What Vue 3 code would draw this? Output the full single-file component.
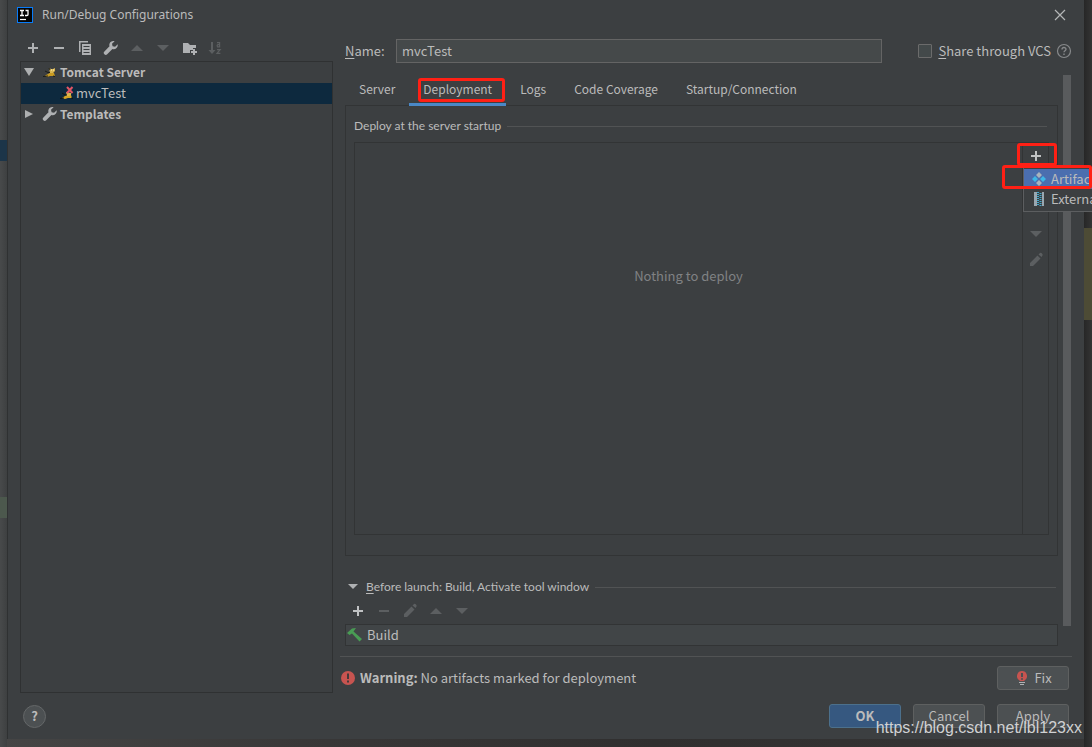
<script setup>
import { ref } from 'vue'

const name = ref('mvcTest')
const shared = ref(false)
const active = ref('Deployment')
const tabs = ['Server', 'Deployment', 'Logs', 'Code Coverage', 'Startup/Connection']
</script>

<template>
  <div class="desktop">
    <section class="dialog" role="dialog" aria-labelledby="dialog-title">
      <header class="titlebar">
        <svg class="logo" width="16" height="16" viewBox="0 0 16 16">
          <rect width="16" height="16" fill="#087cfa" />
          <rect x="1" y="1" width="14" height="14" fill="#050505" />
          <path d="M3 3.500h4M5 3.500v5M3 8.500h4M8.500 3.500h2.500v4q0 1-1 1H8" fill="none" stroke="#fff" stroke-width="1.300" />
          <path d="M3 12.500h6" stroke="#fff" stroke-width="1.200" />
        </svg>
        <h1 id="dialog-title">Run/Debug Configurations</h1>
        <button class="icon close" aria-label="Close">
          <svg width="16" height="16" viewBox="0 0 16 16"><path d="M3 3l10 10M13 3L3 13" stroke="#b4b6b7" stroke-width="1.200" /></svg>
        </button>
      </header>

      <div class="body">
        <aside class="sidebar">
          <div class="tools">
            <button class="icon" aria-label="Add"><svg width="16" height="16" viewBox="0 0 16 16"><path d="M8 3v10M3 8h10" stroke="#afb1b3" stroke-width="2" /></svg></button>
            <button class="icon" aria-label="Remove"><svg width="16" height="16" viewBox="0 0 16 16"><path d="M3 8h10" stroke="#afb1b3" stroke-width="2" /></svg></button>
            <button class="icon" aria-label="Copy">
              <svg width="16" height="16" viewBox="0 0 16 16"><path d="M2 12V1h9v1.500H3.500V12z" fill="#afb1b3" /><path fill-rule="evenodd" d="M5 4h9v11H5zM6.500 6v1h6V6zM6.500 9v1h6V9zM6.500 12v1h6v-1z" fill="#afb1b3" /></svg>
            </button>
            <button class="icon" aria-label="Edit templates">
              <svg width="16" height="16" viewBox="0 0 16 16"><path d="M14.700 4.200l-2.600 2.500-2.500-.5-.6-2.400 2.600-2.600c-2-.6-4.400.3-5.100 2.500-.3 1-.3 1.700 0 2.500L1.400 11.400a1.900 1.900 0 0 0 2.800 2.900l5.200-5.200c3 .9 5.900-1.700 5.300-4.900z" fill="#afb1b3" /></svg>
            </button>
            <button class="icon" aria-label="Move up" disabled><svg width="16" height="16" viewBox="0 0 16 16"><path d="M2 11h12L8 5z" fill="#5c5f61" /></svg></button>
            <button class="icon" aria-label="Move down" disabled><svg width="16" height="16" viewBox="0 0 16 16"><path d="M2 5h12l-6 6z" fill="#5c5f61" /></svg></button>
            <button class="icon" aria-label="Create folder">
              <svg width="16" height="16" viewBox="0 0 16 16"><path d="M2 3h5l2 2h6v3h-3v2H9v3H2z" fill="#afb1b3" /><path d="M13 9v6M10 12h6" stroke="#afb1b3" stroke-width="2" /></svg>
            </button>
            <button class="icon" aria-label="Sort" disabled>
              <svg width="16" height="16" viewBox="0 0 16 16"><path d="M4 2h2v8h2.500L5 14 1.500 10H4z" fill="#5c5f61" /><path d="M10 2.600h2.600v4.200h-2.100q-.9-1.700.5-2.100h1.600M10 9.600h3.200L10 13.400h3.400" fill="none" stroke="#5c5f61" stroke-width="1.200" /></svg>
            </button>
          </div>
          <ul class="tree">
            <li>
              <svg class="arrow" width="12" height="12" viewBox="0 0 12 12"><path d="M1 2h10L6 10z" fill="#adafb0" /></svg>
              <svg class="node" width="16" height="16" viewBox="0 0 16 16">
                <path d="M3 11.500l3-1.500 3-2 3 1 1 3H8l-3 1z" fill="#c99b22" /><path d="M7 4l2 1h2l2-1v3l-2 2H8z" fill="#d9b650" /><path d="M3 7l3 1.500h2M1 12.500l5-.5M11 12l2 .5M7 4l1 2" fill="none" stroke="#1c1d17" stroke-width="1" /><path d="M9 6h1M11 6h1" stroke="#fff5cc" stroke-width="1" />
              </svg>
              <b>Tomcat Server</b>
            </li>
            <li class="child selected">
              <svg class="node" width="16" height="16" viewBox="0 0 16 16">
                <path d="M2 13l3-2 3-2 3 1 1 3H8l-3 1z" fill="#d3a526" /><path d="M6 7l5 1v2l-2 1H7z" fill="#d9b650" /><path d="M2 8l3 2h2M0 13.500l4-.5M11 13l2 .5" fill="none" stroke="#11150f" stroke-width="1" /><path d="M7 2l5.500 6M12.500 2L7 8" stroke="#e05565" stroke-width="2" />
              </svg>
              <span>mvcTest</span>
            </li>
            <li>
              <svg class="arrow" width="12" height="12" viewBox="0 0 12 12"><path d="M2 2l8 4-8 4z" fill="#adafb0" /></svg>
              <svg class="node" width="16" height="16" viewBox="0 0 16 16"><path d="M14.700 4.200l-2.600 2.500-2.500-.5-.6-2.400 2.600-2.600c-2-.6-4.400.3-5.100 2.500-.3 1-.3 1.700 0 2.500L1.400 11.400a1.900 1.900 0 0 0 2.800 2.900l5.200-5.200c3 .9 5.900-1.700 5.300-4.900z" fill="#afb1b3" /></svg>
              <b>Templates</b>
            </li>
          </ul>
        </aside>

        <main class="main">
          <div class="namerow">
            <label class="namelabel" for="name"><u>N</u>ame:</label>
            <input id="name" v-model="name" class="field" type="text" />
            <input id="share" v-model="shared" class="check" type="checkbox" />
            <label for="share"><u>S</u>hare through VCS</label>
            <button class="icon hint" aria-label="About sharing">
              <svg width="16" height="16" viewBox="0 0 16 16"><circle cx="8" cy="8" r="6.500" fill="none" stroke="#87898b" stroke-width="1.200" /><path d="M6 6.500C6 3.800 10 3.900 10 6.300c0 1.400-2 1.500-2 3" fill="none" stroke="#87898b" stroke-width="1.300" /><path d="M7.300 10.500h1.400V12H7.300z" fill="#87898b" /></svg>
            </button>
          </div>

          <div class="scroller">
            <div class="content">
              <nav class="tabs" role="tablist">
                <button v-for="tab in tabs" :key="tab" class="tab" :class="{ active: tab === active, marked: tab === 'Deployment' }" role="tab" :aria-selected="tab === active" @click="active = tab">{{ tab }}</button>
              </nav>
              <div class="panel">
                <h2 class="caption">Deploy at the server startup</h2>
                <div class="deploy">
                  <p class="empty">Nothing to deploy</p>
                  <div class="side">
                    <button class="icon add" aria-label="Add artifact"><svg width="16" height="16" viewBox="0 0 16 16"><path d="M8 3v10M3 8h10" stroke="#c0c2c3" stroke-width="2" /></svg></button>
                    <button class="icon" aria-label="Move artifact down" disabled><svg width="16" height="16" viewBox="0 0 16 16"><path d="M2 5h12l-6 6z" fill="#5c5f61" /></svg></button>
                    <button class="icon" aria-label="Edit artifact" disabled><svg width="16" height="16" viewBox="0 0 16 16"><path d="M2 11l7.500-7.500 3 3L5 14H2zM10.500 2.500L12 1q1-.5 2 .5t.5 2L13.500 5z" fill="#5c5f61" /></svg></button>
                    <div class="popup" role="menu">
                      <button class="item current" role="menuitem">
                        <svg width="16" height="16" viewBox="0 0 16 16"><path d="M8 1l3 3-3 3-3-3zM8 9l3 3-3 3-3-3z" fill="#a9b3bc" /><path d="M4 5l3 3-3 3-3-3zM12 5l3 3-3 3-3-3z" fill="#3eb6e5" /></svg>
                        Artifact...
                      </button>
                      <button class="item" role="menuitem">
                        <svg width="16" height="16" viewBox="0 0 16 16"><path d="M3 1h3v14H3zM11 1h2v14h-2z" fill="#9aa7b0" /><path d="M7 1v14M9.500 2v13" stroke="#40a9ce" stroke-width="2" stroke-dasharray="1 1" /></svg>
                        External Source...
                      </button>
                    </div>
                  </div>
                </div>
              </div>

              <section class="launch">
                <h2 class="caption">
                  <svg width="16" height="16" viewBox="0 0 16 16"><path d="M3 5h10l-5 5z" fill="#afb1b3" /></svg>
                  <span><u>B</u>efore launch: Build, Activate tool window</span>
                </h2>
                <div class="tools">
                  <button class="icon" aria-label="Add task"><svg width="16" height="16" viewBox="0 0 16 16"><path d="M8 3v10M3 8h10" stroke="#c0c2c3" stroke-width="2" /></svg></button>
                  <button class="icon" aria-label="Remove task" disabled><svg width="16" height="16" viewBox="0 0 16 16"><path d="M3 8h10" stroke="#5c5f61" stroke-width="2" /></svg></button>
                  <button class="icon" aria-label="Edit task" disabled><svg width="16" height="16" viewBox="0 0 16 16"><path d="M2 11l7.500-7.500 3 3L5 14H2zM10.500 2.500L12 1q1-.5 2 .5t.5 2L13.500 5z" fill="#5c5f61" /></svg></button>
                  <button class="icon" aria-label="Move task up" disabled><svg width="16" height="16" viewBox="0 0 16 16"><path d="M2 11h12L8 5z" fill="#5c5f61" /></svg></button>
                  <button class="icon" aria-label="Move task down" disabled><svg width="16" height="16" viewBox="0 0 16 16"><path d="M2 5h12l-6 6z" fill="#5c5f61" /></svg></button>
                </div>
                <ul class="tasks">
                  <li>
                    <svg width="16" height="16" viewBox="0 0 16 16"><path d="M0 6l5-4.500 4-.5-2.500 3.500L15 12l-2.500 2.500L5 6.500 2.500 8z" fill="#499c54" /></svg>
                    Build
                  </li>
                </ul>
              </section>
            </div>
            <div class="bar" aria-hidden="true"></div>
          </div>

          <div class="warning">
            <svg width="16" height="16" viewBox="0 0 16 16"><circle cx="8" cy="8" r="7" fill="#c75450" /><path d="M8 3.500v5.500M8 10.500v2" stroke="#45393a" stroke-width="2" /></svg>
            <p><b>Warning:</b> No artifacts marked for deployment</p>
            <button class="btn fix">
              <svg width="16" height="16" viewBox="0 0 16 16"><path d="M8 1a5 5 0 0 1 3 9l-1 1H6l-1-1a5 5 0 0 1 3-9z" fill="#c75450" /><path d="M8 3v4M8 8.200v1.600" stroke="#4c5052" stroke-width="2" /><path d="M5 12.500h6M6 14.500h4" stroke="#afb1b3" stroke-width="1" /></svg>
              Fix
            </button>
          </div>
        </main>
      </div>

      <footer class="footer">
        <button class="help" aria-label="Help">?</button>
        <button class="btn primary">OK</button>
        <button class="btn">Cancel</button>
        <button class="btn">Apply</button>
      </footer>
    </section>
    <span class="credit">https://blog.csdn.net/lbl123xx</span>
  </div>
</template>

<style>
body {
  margin: 0;
  background: #343333;
}
</style>

<style scoped>
*,
*::after {
  box-sizing: border-box;
}
.desktop {
  position: relative;
  display: flex;
  height: 100vh;
  padding: 0 8px 8px 7px;
  overflow: hidden;
  background:
    linear-gradient(#1c3549, #1c3549) 0 140px / 7px 21px no-repeat,
    linear-gradient(#4c584d, #4c584d) 0 497px / 7px 21px no-repeat,
    linear-gradient(#4d4b35, #4d4b35) 100% 228px / 8px 92px no-repeat,
    linear-gradient(90deg, #484a4b, #3e4041) 0 0 / 7px 100% no-repeat,
    linear-gradient(90deg, #272727, #343434) 100% 0 / 8px 100% no-repeat,
    linear-gradient(90deg, #454545, #383737 30%, #302f2f 60%, #373636);
  color: #bbbbbb;
  font: 13px/20px "Noto Sans CJK SC", "Noto Sans", sans-serif;
}
.dialog {
  flex: 1;
  display: flex;
  flex-direction: column;
  min-width: 0;
  border-left: 1px solid #2f3132;
  background: #3c3f41;
}
h1,
h2,
p,
ul {
  margin: 0;
  padding: 0;
  font: inherit;
  list-style: none;
}
svg {
  display: block;
  flex: none;
}
button,
input {
  margin: 0;
  color: inherit;
  font: inherit;
}
u {
  text-underline-offset: 2px;
}
.icon {
  width: 16px;
  height: 16px;
  padding: 0;
  border: 0;
  background: none;
}
.titlebar {
  display: flex;
  align-items: center;
  gap: 9px;
  height: 29px;
  padding: 0 16px 0 9px;
  font-family: "Noto Sans", sans-serif;
  font-size: 12px;
}
.close {
  margin-left: auto;
}
.body {
  flex: 1;
  display: flex;
  gap: 12px;
  min-height: 0;
  padding-left: 12px;
}
.sidebar {
  display: flex;
  flex-direction: column;
  width: 313px;
}
.tools {
  display: flex;
  align-items: center;
  gap: 10px;
}
.sidebar .tools {
  height: 32px;
  padding: 6px 5px 0;
}
.tree {
  flex: 1;
  border: 1px solid #2f3132;
}
.tree li {
  display: flex;
  align-items: center;
  height: 21px;
  padding: 0 0 2px 2px;
}
.tree b {
  font-size: 12px;
}
.tree .child {
  padding-left: 39px;
}
.tree .selected {
  background: #0d293e;
}
.arrow {
  margin-right: 7px;
}
.node {
  margin-right: 2px;
}
.child .node {
  margin-right: 0;
}
.main {
  flex: 1;
  display: flex;
  flex-direction: column;
  min-width: 0;
}
.namerow {
  display: flex;
  align-items: center;
  padding: 10px 12px 12px 0;
}
.namelabel {
  width: 51px;
}
.field {
  flex: 1;
  min-width: 0;
  height: 24px;
  padding: 0 5px 2px;
  border: 1px solid #646464;
  outline: 0;
  background: #45494a;
}
.check {
  appearance: none;
  width: 14px;
  height: 14px;
  margin: 0 6px 0 36px;
  border: 1px solid #6b6b6b;
  border-radius: 1px;
  background: #43494a;
}
.hint {
  margin-left: 5px;
}
.scroller {
  flex: 1;
  display: flex;
  gap: 5px;
  min-height: 0;
  padding-right: 13px;
}
.content {
  flex: 1;
  display: flex;
  flex-direction: column;
  min-width: 0;
}
.bar {
  width: 8px;
  margin-bottom: 20px;
  background: #595b5d;
}
.tabs {
  display: flex;
  height: 31px;
  font-size: 12px;
}
.tab {
  position: relative;
  z-index: 1;
  padding: 0 14px;
  border: 0;
  border-bottom: 3px solid transparent;
  background: none;
}
.tab.active {
  border-color: #4a88c7;
}
.marked::after {
  content: "";
  position: absolute;
  inset: 3px 1px 1px 9px;
  border: 3px solid #ff2015;
  border-radius: 3px;
}
.panel {
  flex: 1;
  display: flex;
  flex-direction: column;
  margin-top: -1px;
  padding: 10px 8px 20px;
  border: 1px solid #323435;
}
.caption {
  display: flex;
  align-items: center;
  font-family: Lato, "Noto Sans", sans-serif;
  font-size: 12px;
}
.caption::after {
  content: "";
  flex: 1;
  height: 1px;
  margin: 0 2px 0 6px;
  background: #515354;
}
.deploy {
  flex: 1;
  display: flex;
  margin-top: 6px;
  border: 1px solid #323435;
}
.empty {
  flex: 1;
  padding-top: 123px;
  color: #808284;
  text-align: center;
}
.side {
  position: relative;
  display: flex;
  flex-direction: column;
  align-items: center;
  gap: 10px;
  width: 26px;
  padding-top: 5px;
  border-left: 1px solid #323435;
}
.side .add {
  position: relative;
  margin-bottom: 52px;
}
.add::after {
  content: "";
  position: absolute;
  inset: -5px -13px -2px -11px;
  border: 3px solid #ff2015;
  border-radius: 3px;
}
.popup {
  position: absolute;
  z-index: 2;
  top: 24px;
  left: 0;
  width: 150px;
  padding: 1px 0 2px;
  border: 1px solid #5c5e60;
  background: #3c3f41;
}
.popup::after {
  content: "";
  position: absolute;
  top: -3px;
  left: -22px;
  width: 90px;
  height: 24px;
  border: 3px solid #ff2015;
  border-radius: 3px;
}
.item {
  display: flex;
  align-items: center;
  gap: 4px;
  width: 100%;
  height: 20px;
  padding: 0 7px;
  border: 0;
  background: none;
  white-space: nowrap;
}
.item.current {
  background: #4b6eaf;
}
.launch {
  margin-top: 21px;
}
.launch .caption svg {
  margin-right: 5px;
}
.launch .tools {
  padding: 6px 5px 5px;
}
.tasks {
  border: 1px solid #323435;
  background: #414547;
}
.tasks li {
  display: flex;
  align-items: center;
  gap: 4px;
  padding-left: 1px;
}
.warning {
  display: flex;
  align-items: center;
  gap: 4px;
  height: 37px;
  margin: 10px 12px 0 -5px;
  padding: 6px 3px 0 0;
  border-top: 1px solid #515354;
}
.btn {
  display: flex;
  align-items: center;
  justify-content: center;
  width: 72px;
  height: 24px;
  padding: 0;
  border: 1px solid #5e6060;
  border-radius: 3px;
  background: #4c5052;
}
.fix {
  gap: 4px;
  margin-left: auto;
}
.primary {
  margin-left: auto;
  border-color: #4c708c;
  background: #365880;
  font-weight: 700;
}
.footer {
  display: flex;
  align-items: center;
  gap: 12px;
  height: 46px;
  padding: 0 15px;
}
.help {
  width: 23px;
  height: 23px;
  padding: 0;
  border: 1px solid #646768;
  border-radius: 50%;
  background: #4c5052;
  font-weight: 700;
}
.credit {
  position: absolute;
  right: 10px;
  bottom: 9px;
  color: #d0d1d2;
  font: 16px/20px "Liberation Sans", sans-serif;
}
</style>
